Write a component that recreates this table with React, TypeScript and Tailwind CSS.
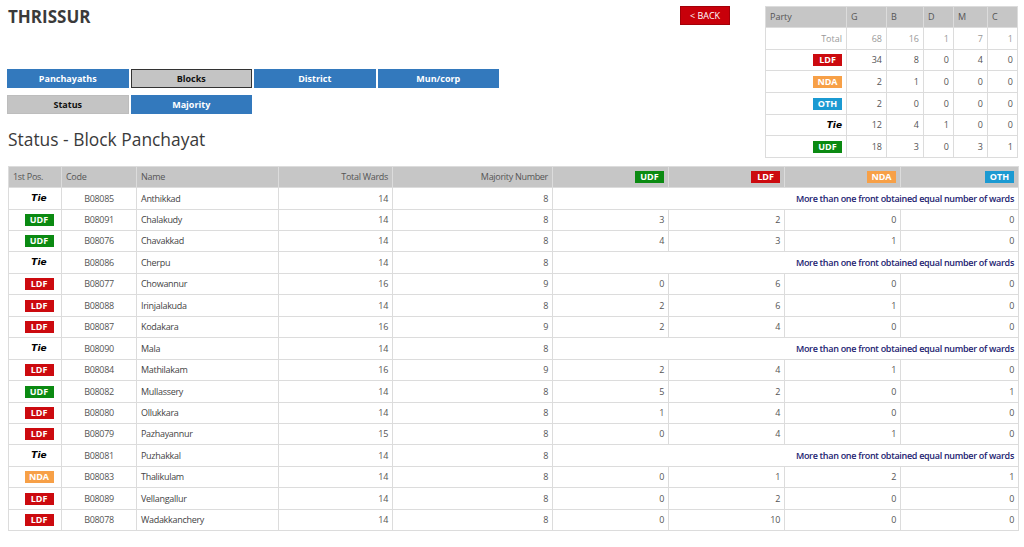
import React from "react";

type Party = "UDF" | "LDF" | "NDA" | "OTH" | "Tie";

type Row = {
  pos: Party;
  code: string;
  name: string;
  total: number;
  majority: number;
  udf?: number;
  ldf?: number;
  nda?: number;
  oth?: number;
};

const rows: Row[] = [
  { pos: "Tie", code: "B08085", name: "Anthikkad", total: 14, majority: 8 },
  { pos: "UDF", code: "B08091", name: "Chalakudy", total: 14, majority: 8, udf: 3, ldf: 2, nda: 0, oth: 0 },
  { pos: "UDF", code: "B08076", name: "Chavakkad", total: 14, majority: 8, udf: 4, ldf: 3, nda: 1, oth: 0 },
  { pos: "Tie", code: "B08086", name: "Cherpu", total: 14, majority: 8 },
  { pos: "LDF", code: "B08077", name: "Chowannur", total: 16, majority: 9, udf: 0, ldf: 6, nda: 0, oth: 0 },
  { pos: "LDF", code: "B08088", name: "Irinjalakuda", total: 14, majority: 8, udf: 2, ldf: 6, nda: 1, oth: 0 },
  { pos: "LDF", code: "B08087", name: "Kodakara", total: 16, majority: 9, udf: 2, ldf: 4, nda: 0, oth: 0 },
  { pos: "Tie", code: "B08090", name: "Mala", total: 14, majority: 8 },
  { pos: "LDF", code: "B08084", name: "Mathilakam", total: 16, majority: 9, udf: 2, ldf: 4, nda: 1, oth: 0 },
  { pos: "UDF", code: "B08082", name: "Mullassery", total: 14, majority: 8, udf: 5, ldf: 2, nda: 0, oth: 1 },
  { pos: "LDF", code: "B08080", name: "Ollukkara", total: 14, majority: 8, udf: 1, ldf: 4, nda: 0, oth: 0 },
  { pos: "LDF", code: "B08079", name: "Pazhayannur", total: 15, majority: 8, udf: 0, ldf: 4, nda: 1, oth: 0 },
  { pos: "Tie", code: "B08081", name: "Puzhakkal", total: 14, majority: 8 },
  { pos: "NDA", code: "B08083", name: "Thalikulam", total: 14, majority: 8, udf: 0, ldf: 1, nda: 2, oth: 1 },
  { pos: "LDF", code: "B08089", name: "Vellangallur", total: 14, majority: 8, udf: 0, ldf: 2, nda: 0, oth: 0 },
  { pos: "LDF", code: "B08078", name: "Wadakkanchery", total: 14, majority: 8, udf: 0, ldf: 10, nda: 0, oth: 0 },
];

const summary: { party: Party | "Total"; g: number; b: number; d: number; m: number; c: number }[] = [
  { party: "Total", g: 68, b: 16, d: 1, m: 7, c: 1 },
  { party: "LDF", g: 34, b: 8, d: 0, m: 4, c: 0 },
  { party: "NDA", g: 2, b: 1, d: 0, m: 0, c: 0 },
  { party: "OTH", g: 2, b: 0, d: 0, m: 0, c: 0 },
  { party: "Tie", g: 12, b: 4, d: 1, m: 0, c: 0 },
  { party: "UDF", g: 18, b: 3, d: 0, m: 3, c: 1 },
];

const badgeColor: Record<string, string> = {
  UDF: "bg-[#0b8a12]",
  LDF: "bg-[#cc0a0f]",
  NDA: "bg-[#f7a047]",
  OTH: "bg-[#1b9ad2]",
};

const Badge = ({ party }: { party: Party }) => {
  if (party === "Tie") {
    return <span className="font-['DejaVu_Sans',sans-serif] text-[9px] font-bold italic tracking-normal text-black">Tie</span>;
  }
  return (
    <span className={`inline-block w-[29px] h-[12px] leading-[12px] text-center text-[9px] font-bold tracking-normal text-white ${badgeColor[party]}`}>
      {party}
    </span>
  );
};

const NavButton = ({ label, active, boxed }: { label: string; active?: boolean; boxed?: boolean }) => (
  <div
    className={`w-[121.5px] h-[19px] flex items-center justify-center text-[9px] font-bold ${
      active
        ? boxed
          ? "bg-[#c4c4c4] text-[#111] border border-[#333]"
          : "bg-[#c4c4c4] text-[#111] border border-[#bdbdbd]"
        : "bg-[#3379bd] text-white"
    }`}
  >
    {label}
  </div>
);

const td = "border border-[#dcdcdc] px-[4px]";
const th = "border border-[#dcdcdc] px-[4px] bg-[#c6c6c6] font-normal text-[#555]";

export default function App() {
  return (
    <div className="w-[1024px] min-h-[547px] bg-white text-[9px] text-[#555] font-['Open_Sans','Liberation_Sans',sans-serif]">
      <div className="flex items-start pl-[7px] pr-[6px]">
        <div className="flex-1">
          <h1 className="pl-[1px] pt-[5px] text-[17px] leading-[24px] font-bold text-[#3a3a3a]">THRISSUR</h1>
          <div className="mt-[40px] flex gap-[2px]">
            <NavButton label="Panchayaths" />
            <NavButton label="Blocks" active boxed />
            <NavButton label="District" />
            <NavButton label="Mun/corp" />
          </div>
          <div className="mt-[7px] flex gap-[2px]">
            <NavButton label="Status" active />
            <NavButton label="Majority" />
          </div>
          <h2 className="pl-[1px] mt-[12px] text-[17.4px] leading-[26px] text-[#3a3a3a]">Status - Block Panchayat</h2>
        </div>
        <div className="mt-[6px] mr-[35px] w-[50px] h-[19px] bg-[#c8000a] border border-[#a30008] text-white text-[9px] flex items-center justify-center">
          &lt; BACK
        </div>
        <table className="mt-[6px] w-[252px] border-collapse table-fixed text-[9px]">
          <colgroup>
            <col className="w-[81px]" />
            <col className="w-[40px]" />
            <col className="w-[37px]" />
            <col className="w-[30px]" />
            <col className="w-[34px]" />
            <col className="w-[30px]" />
          </colgroup>
          <thead>
            <tr className="h-[21px]">
              <th className={`${th} text-left`}>Party</th>
              <th className={`${th} text-left`}>G</th>
              <th className={`${th} text-left`}>B</th>
              <th className={`${th} text-left`}>D</th>
              <th className={`${th} text-left`}>M</th>
              <th className={`${th} text-left`}>C</th>
            </tr>
          </thead>
          <tbody>
            {summary.map((s) => {
              const muted = s.party === "Total";
              const cls = `${td} text-right ${muted ? "text-[#999]" : "text-[#555]"}`;
              return (
                <tr key={s.party} className="h-[21.7px]">
                  <td className={cls}>{s.party === "Total" ? "Total" : <Badge party={s.party} />}</td>
                  <td className={cls}>{s.g}</td>
                  <td className={cls}>{s.b}</td>
                  <td className={cls}>{s.d}</td>
                  <td className={cls}>{s.m}</td>
                  <td className={cls}>{s.c}</td>
                </tr>
              );
            })}
          </tbody>
        </table>
      </div>

      <div className="mt-[8px] pl-[8px] pr-[6px]">
        <table className="w-[1010px] border-collapse table-fixed tracking-[-0.3px]">
          <colgroup>
            <col className="w-[53px]" />
            <col className="w-[75px]" />
            <col className="w-[142px]" />
            <col className="w-[114px]" />
            <col className="w-[160px]" />
            <col className="w-[116px]" />
            <col className="w-[116px]" />
            <col className="w-[116px]" />
            <col className="w-[118px]" />
          </colgroup>
          <thead>
            <tr className="h-[21px]">
              <th className={`${th} text-left`}>1st Pos.</th>
              <th className={`${th} text-left`}>Code</th>
              <th className={`${th} text-left`}>Name</th>
              <th className={`${th} text-right`}>Total Wards</th>
              <th className={`${th} text-right`}>Majority Number</th>
              <th className={`${th} text-right`}><Badge party="UDF" /></th>
              <th className={`${th} text-right`}><Badge party="LDF" /></th>
              <th className={`${th} text-right`}><Badge party="NDA" /></th>
              <th className={`${th} text-right`}><Badge party="OTH" /></th>
            </tr>
          </thead>
          <tbody>
            {rows.map((r) => (
              <tr key={r.code} className="h-[21.45px]">
                <td className={`${td} pl-[12px] text-center`}><Badge party={r.pos} /></td>
                <td className={`${td} text-center text-[#555]`}>{r.code}</td>
                <td className={`${td} text-left text-[#444]`}>{r.name}</td>
                <td className={`${td} text-right`}>{r.total}</td>
                <td className={`${td} text-right`}>{r.majority}</td>
                {r.pos === "Tie" ? (
                  <td colSpan={4} className={`${td} text-right font-semibold text-[#222270]`}>
                    More than one front obtained equal number of wards
                  </td>
                ) : (
                  <>
                    <td className={`${td} text-right`}>{r.udf}</td>
                    <td className={`${td} text-right`}>{r.ldf}</td>
                    <td className={`${td} text-right`}>{r.nda}</td>
                    <td className={`${td} text-right`}>{r.oth}</td>
                  </>
                )}
              </tr>
            ))}
          </tbody>
        </table>
      </div>
    </div>
  );
}
